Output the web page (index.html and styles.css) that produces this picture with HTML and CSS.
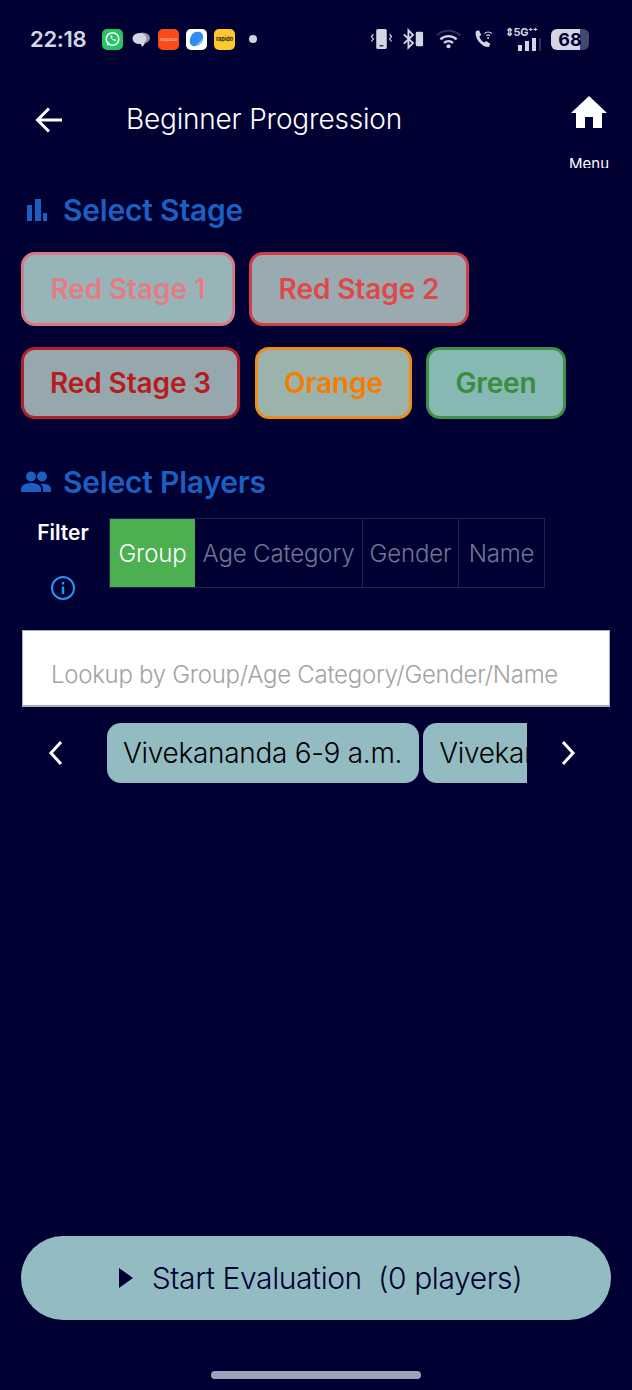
FILE: index.html
```html
<!DOCTYPE html>
<html lang="en">
<head>
    <meta charset="UTF-8">
    <title>Beginner Progression</title>
    <link rel="stylesheet" href="styles.css">
</head>
<body>
<div class="page">
    <div class="status-bar">
        <span class="time">22:18</span>
        <div class="app-icons">
            <span class="app app-whatsapp">
                <svg viewBox="0 0 22 22" width="22" height="22"><circle cx="11" cy="11" r="6.6" fill="none" stroke="#fff" stroke-width="1.7"/><path d="M5 18l1.3-4 2.6 2.6z" fill="#fff"/><path d="M8.6 7.8c.9 3 2.600 4.700 5.300 5.500l.9-1.500-1.800-.9-.7.7c-.9-.4-1.500-1.100-1.900-2l.7-.7-.9-1.800z" fill="#fff"/></svg>
            </span>
            <svg class="app-chat" viewBox="0 0 20 20" width="20" height="20"><ellipse cx="11.500" cy="9" rx="7.500" ry="5.500" fill="#8d8fa6"/><ellipse cx="8.500" cy="9.500" rx="7" ry="5.500" fill="#d4d5e2"/><path d="M9 14h5l-2.500 4z" fill="#d4d5e2"/></svg>
            <span class="app app-orange">snapdeal</span>
            <span class="app app-white">
                <svg viewBox="0 0 22 22" width="22" height="22"><path d="M12 3.500c4 0 6 2 6 6 0 5-4 9-9 9-3 0-5-2-5-5 0-5 3-10 8-10z" fill="#2f8cf0"/><path d="M18 9.500c0 5-4 9-9 9 4-3 7-6 9-9z" fill="#7cc0fa"/></svg>
            </span>
            <span class="app app-yellow">rapido</span>
            <span class="dot"></span>
        </div>
        <div class="sys-icons">
            <svg class="sys-vibrate" viewBox="0 0 24 22" width="23" height="22"><rect x="6.500" y="0.500" width="11" height="21" rx="2" fill="#d4d5e2"/><rect x="10" y="17.500" width="4" height="1.200" fill="#000033"/><path d="M3.500 6l-2 2.500 2 2.500-2 2.500M20.500 6l2 2.500-2 2.500 2 2.500" fill="none" stroke="#d4d5e2" stroke-width="1.200"/></svg>
            <svg class="sys-bt" viewBox="0 0 24 22" width="22" height="22"><path d="M2 6l10 9.500-5 5V1.500l5 5-10 9.500" fill="none" stroke="#d4d5e2" stroke-width="2"/><rect x="15" y="3" width="8" height="16" rx="1.500" fill="#d4d5e2"/></svg>
            <svg class="sys-wifi" viewBox="0 0 30 22" width="27" height="22"><path d="M2 7a19 19 0 0 1 26 0" fill="none" stroke="#2c2f5c" stroke-width="2.400"/><path d="M6 11.500a13 13 0 0 1 18 0M10 15.500a7 7 0 0 1 10 0" fill="none" stroke="#d4d5e2" stroke-width="2.600"/><circle cx="15" cy="19" r="2.300" fill="#d4d5e2"/></svg>
            <svg class="sys-call" viewBox="0 0 24 22" width="22" height="22"><path d="M3 2.500l3.500-1 2.500 5-2 1.800c.8 3 2.800 5.400 5.400 6.600l1.900-1.800 4.500 3.200-1.300 3.400C10 20.200 1.500 11 3 2.500z" fill="#d4d5e2"/><path d="M12.500 5a6 6 0 0 1 8 0M14.500 7.500a3 3 0 0 1 4 0" fill="none" stroke="#d4d5e2" stroke-width="1.300"/><circle cx="16.500" cy="10" r="1.100" fill="#d4d5e2"/></svg>
            <div class="signal">
                <span class="signal-label">⇕5G⁺⁺</span>
                <div class="signal-bars"><i class="b1"></i><i class="b2"></i><i class="b3"></i><i class="b4"></i></div>
            </div>
            <div class="battery"><span class="battery-level">68</span></div>
        </div>
    </div>

    <header class="app-bar">
        <svg class="back" viewBox="0 0 30 30" width="30" height="30"><path d="M28 15H4M15 3.500L3.500 15 15 26.500" fill="none" stroke="#fff" stroke-width="3"/></svg>
        <h1 class="app-title">Beginner Progression</h1>
        <div class="menu">
            <svg viewBox="0 0 36 32" width="36" height="32"><path d="M18 0L36 17h-5v15H22V21h-8v11H5V17H0z" fill="#fff"/></svg>
            <span class="menu-label">Menu</span>
        </div>
    </header>

    <section class="stage-section">
        <h2 class="section-title">
            <svg viewBox="0 0 20 22" width="20" height="22"><path d="M0 6h5v16H0zM8 0h6v22H8zM16 14h4v8h-4z" fill="#1b5fc1"/></svg>
            Select Stage
        </h2>
        <div class="stage-row">
            <button class="stage stage-red1">Red Stage 1</button>
            <button class="stage stage-red2">Red Stage 2</button>
        </div>
        <div class="stage-row">
            <button class="stage stage-red3">Red Stage 3</button>
            <button class="stage stage-orange">Orange</button>
            <button class="stage stage-green">Green</button>
        </div>
    </section>

    <section class="players-section">
        <h2 class="section-title">
            <svg viewBox="0 0 30 22" width="30" height="22"><circle cx="10" cy="5.500" r="5" fill="#1b5fc1"/><circle cx="21" cy="5.500" r="5" fill="#1b5fc1"/><path d="M0 21v-3c0-4 5-6 10-6s10 2 10 6v3z" fill="#1b5fc1"/><path d="M22 21v-3c0-2-.8-3.800-2.500-5 5-.8 10.500 1 10.500 5v3z" fill="#1b5fc1"/></svg>
            Select Players
        </h2>
        <div class="filter-row">
            <div class="filter-side">
                <span class="filter-label">Filter</span>
                <svg viewBox="0 0 24 24" width="24" height="24"><circle cx="12" cy="12" r="11" fill="none" stroke="#2196f3" stroke-width="2"/><path d="M10.800 10.500h2.400V18h-2.400zM10.800 6h2.400v2.400h-2.400z" fill="#2196f3"/></svg>
            </div>
            <div class="tabs">
                <div class="tab tab-active">Group</div>
                <div class="tab tab-age">Age Category</div>
                <div class="tab tab-gender">Gender</div>
                <div class="tab tab-name">Name</div>
            </div>
        </div>
        <div class="search">Lookup by Group/Age Category/Gender/Name</div>
        <div class="chips-row">
            <svg viewBox="0 0 16 26" width="16" height="26"><path d="M13 2L3 13l10 11" fill="none" stroke="#fff" stroke-width="3"/></svg>
            <div class="chips">
                <div class="chip">Vivekananda 6-9 a.m.</div>
                <div class="chip">Vivekananda 6-9 a.m.</div>
            </div>
            <svg viewBox="0 0 16 26" width="16" height="26"><path d="M3 2l10 11L3 24" fill="none" stroke="#fff" stroke-width="3"/></svg>
        </div>
    </section>

    <div class="bottom">
        <button class="start">
            <svg viewBox="0 0 14 20" width="14" height="20"><path d="M0 0l14 10L0 20z" fill="#000033"/></svg>
            <span>Start Evaluation&nbsp; (0 players)</span>
        </button>
        <div class="home-bar"></div>
    </div>
</div>
</body>
</html>
```

FILE: styles.css
```css
* {
    box-sizing: border-box;
}
html, body {
    margin: 0;
    padding: 0;
}
body {
    background-color: #000033;
    font-family: Inter, "Noto Sans", sans-serif;
    overflow: hidden;
}
.page {
    display: flex;
    flex-direction: column;
    width: 632px;
    height: 1390px;
    overflow: hidden;
}

/* status bar */
.status-bar {
    display: flex;
    align-items: center;
    height: 22px;
    margin-top: 28px;
    padding: 0 43px 0 30px;
    color: #d4d5e2;
}
.time {
    font-size: 22px;
    font-weight: 600;
    width: 57px;
    letter-spacing: -0.3px;
}
.app-icons {
    display: flex;
    align-items: center;
    gap: 7px;
    margin-left: 15px;
}
.app {
    display: flex;
    align-items: center;
    justify-content: center;
    width: 21px;
    height: 21px;
    border-radius: 5px;
    overflow: hidden;
    font-size: 5px;
    white-space: nowrap;
}
.app-whatsapp {
    background: #25c465;
}
.app-chat {
    margin-left: 1px;
}
.app-orange {
    background: #fa4a1c;
    color: #ffd9c9;
    font-size: 4px;
}
.app-white {
    background: #fff;
}
.app-yellow {
    background: #fdc828;
    color: #222;
    font-weight: 700;
    font-size: 5.500px;
}
.dot {
    width: 8px;
    height: 8px;
    margin-left: 7px;
    border-radius: 50%;
    background: #d4d5e2;
}
.sys-icons {
    display: flex;
    align-items: center;
    margin-left: auto;
}
.sys-bt {
    margin-left: 9px;
}
.sys-wifi {
    margin-left: 11px;
}
.sys-call {
    margin-left: 11px;
}
.signal {
    display: flex;
    flex-direction: column;
    width: 36px;
    height: 24px;
    margin-left: 10px;
}
.signal-label {
    font-size: 11px;
    font-weight: 700;
    letter-spacing: -0.4px;
    line-height: 11px;
    white-space: nowrap;
}
.signal-bars {
    display: flex;
    align-items: flex-end;
    justify-content: flex-end;
    gap: 3px;
    height: 13px;
}
.signal-bars i {
    display: block;
    width: 4px;
    background: #d4d5e2;
}
.signal-bars .b1 { height: 6px; }
.signal-bars .b2 { height: 10px; }
.signal-bars .b3 { height: 13px; }
.signal-bars .b4 { height: 13px; width: 2px; background: #2c2f5c; }
.battery {
    width: 38px;
    height: 21px;
    margin-left: 10px;
    border-radius: 6px;
    background: linear-gradient(90deg, #d4d5e2 0 76%, #44476e 76% 100%);
}
.battery-level {
    display: block;
    text-align: center;
    color: #000033;
    font-size: 18px;
    font-weight: 700;
    line-height: 21px;
}

/* header */
.app-bar {
    display: flex;
    align-items: flex-start;
    height: 116px;
    padding: 46px 22px 0 34px;
}
.back {
    margin-top: 9px;
}
.app-title {
    margin: 0 0 0 62px;
    color: #fff;
    font-size: 28px;
    font-weight: 300;
    letter-spacing: -0.2px;
    line-height: 46px;
    white-space: nowrap;
}
.menu {
    display: flex;
    flex-direction: column;
    align-items: center;
    width: 42px;
    height: 72px;
    margin-left: auto;
    overflow: hidden;
    color: #fff;
    font-size: 15px;
}
.menu svg,
.menu-label {
    flex: none;
}
.menu-label {
    margin-top: 27px;
    line-height: 18px;
}

/* sections */
.section-title {
    display: flex;
    align-items: center;
    margin: 0;
    color: #1b5fc1;
    font-size: 30px;
    font-weight: 600;
    letter-spacing: -0.2px;
    line-height: 40px;
}
.stage-section {
    padding: 24px 21px 0;
}
.stage-section .section-title {
    gap: 16px;
    padding-left: 6px;
}
.stage-row {
    display: flex;
    margin-top: 22px;
}
.stage-section .stage-row + .stage-row {
    margin-top: 21px;
}
.stage {
    height: 74px;
    border: 3px solid;
    border-radius: 14px;
    padding: 0;
    font-family: inherit;
    font-size: 28px;
    font-weight: 600;
    letter-spacing: -0.1px;
}
.stage-red1 {
    width: 214px;
    margin-right: 14px;
    background: #97b4b9;
    border-color: #d97b85;
    color: #e57c84;
}
.stage-red2 {
    width: 220px;
    background: #99abb0;
    border-color: #cf3f4a;
    color: #e04848;
}
.stage-red3 {
    width: 219px;
    height: 72px;
    margin-right: 15px;
    background: #96a8ae;
    border-color: #b3202e;
    color: #b71c1c;
}
.stage-orange {
    width: 157px;
    height: 72px;
    margin-right: 14px;
    background: #9bb3ab;
    border-color: #ee8c1c;
    color: #f57c00;
}
.stage-green {
    width: 140px;
    height: 72px;
    background: #86b8b4;
    border-color: #3d9148;
    color: #388e3c;
}
.players-section {
    padding: 43px 21px 0;
}
.players-section .section-title {
    gap: 12px;
}
.filter-row {
    display: flex;
    margin-top: 16px;
}
.filter-side {
    display: flex;
    flex-direction: column;
    align-items: center;
    width: 84px;
    margin-right: 4px;
}
.filter-label {
    margin-bottom: 28px;
    color: #fff;
    font-size: 21px;
    font-weight: 600;
    line-height: 30px;
}
.tabs {
    display: flex;
    height: 70px;
    border: 1px solid #1f2456;
    font-size: 24px;
    font-weight: 300;
    letter-spacing: -0.15px;
    color: #6b7894;
}
.tab {
    display: flex;
    align-items: center;
    justify-content: center;
    padding-top: 1px;
    white-space: nowrap;
}
.tab-active {
    width: 85px;
    background: #4caf50;
    color: #fff;
}
.tab-age {
    width: 168px;
    border-right: 1px solid #1f2456;
}
.tab-gender {
    width: 96px;
    border-right: 1px solid #1f2456;
}
.tab-name {
    width: 85px;
}
.search {
    height: 77px;
    margin: 30px 1px 0;
    padding-left: 28px;
    background: #fff;
    border: 1px solid #a9a9c4;
    border-bottom-width: 2px;
    color: #a3a3a3;
    font-size: 24px;
    font-weight: 300;
    letter-spacing: -0.28px;
    line-height: 88px;
    white-space: nowrap;
    overflow: hidden;
}
.chips-row {
    display: flex;
    align-items: center;
    height: 60px;
    margin-top: 16px;
    padding-left: 27px;
}
.chips {
    display: flex;
    gap: 4px;
    width: 420px;
    margin: 0 33px 0 43px;
    overflow: hidden;
}
.chip {
    flex: none;
    height: 60px;
    padding: 0 17px 0 16px;
    background: #93bcc2;
    border-radius: 14px;
    color: #000;
    font-size: 28px;
    font-weight: 300;
    letter-spacing: -0.3px;
    line-height: 60px;
    white-space: nowrap;
}

/* bottom */
.bottom {
    display: flex;
    flex-direction: column;
    align-items: center;
    margin-top: auto;
    padding: 0 21px 11px;
}
.start {
    display: flex;
    align-items: center;
    justify-content: center;
    gap: 19px;
    width: 590px;
    height: 84px;
    padding: 0 0 0 9px;
    border: none;
    border-radius: 42px;
    background: #93bcc2;
    color: #000033;
    font-family: inherit;
    font-size: 30px;
    font-weight: 300;
    letter-spacing: -0.4px;
}
.home-bar {
    width: 210px;
    height: 8px;
    margin-top: 51px;
    border-radius: 4px;
    background: #a0a0bd;
}
```
